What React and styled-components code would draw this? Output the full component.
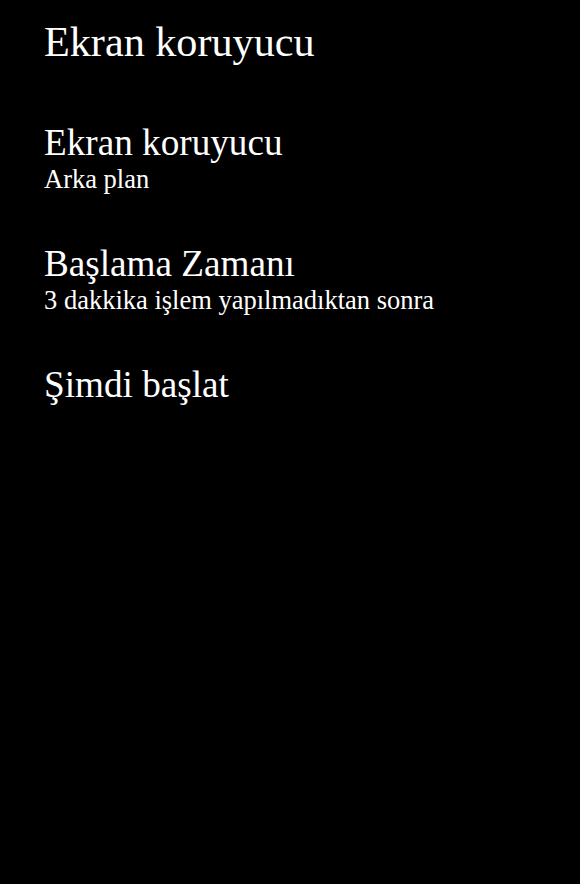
import React from "react";
import styled, { createGlobalStyle } from "styled-components";

const GlobalStyle = createGlobalStyle`
  html, body { margin: 0; padding: 0; background: #000; }
  body { font-family: "Liberation Serif", "Times New Roman", serif; color: #fff; }
`;

const Page = styled.main`
  min-height: 884px;
  box-sizing: border-box;
  background: #000;
  padding: 17px 20px 0 44px;
  display: flex;
  flex-direction: column;
`;

const PageTitle = styled.h1`
  margin: 0 0 55px;
  font-weight: 400;
  font-size: 42.2px;
  line-height: 50px;
  color: #fff;
`;

const List = styled.div`
  display: flex;
  flex-direction: column;
  gap: 49px;
`;

const Item = styled.div`
  display: flex;
  flex-direction: column;
`;

const ItemTitle = styled.div`
  font-size: 37.2px;
  line-height: 42px;
  color: #fff;
`;

const ItemValue = styled.div`
  font-size: 26.5px;
  line-height: 30px;
  color: #fff;
`;

const items = [
  { title: "Ekran koruyucu", value: "Arka plan" },
  { title: "Başlama Zamanı", value: "3 dakkika işlem yapılmadıktan sonra" },
  { title: "Şimdi başlat" },
];

export default function App() {
  return (
    <>
      <GlobalStyle />
      <Page>
        <PageTitle>Ekran koruyucu</PageTitle>
        <List>
          {items.map((it) => (
            <Item key={it.title}>
              <ItemTitle>{it.title}</ItemTitle>
              {it.value && <ItemValue>{it.value}</ItemValue>}
            </Item>
          ))}
        </List>
      </Page>
    </>
  );
}
